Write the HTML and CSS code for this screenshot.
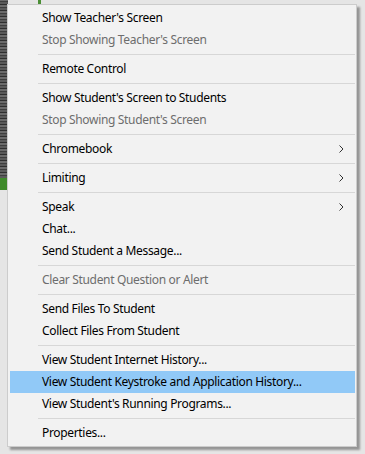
FILE: index.html
```html
<!DOCTYPE html>
<html lang="en">
<head>
  <meta charset="UTF-8" />
  <title>Student Context Menu</title>
  <link rel="stylesheet" href="styles.css">
</head>
<body>

  <div class="desktop">
    <div class="side-strip">
      <div class="photo"></div>
      <div class="green-bar"></div>
    </div>
    <div class="top-mark"></div>
  </div>

  <ul class="context-menu">
    <li class="item">Show Teacher's Screen</li>
    <li class="item disabled">Stop Showing Teacher's Screen</li>
    <li class="sep"></li>
    <li class="item">Remote Control</li>
    <li class="sep"></li>
    <li class="item">Show Student's Screen to Students</li>
    <li class="item disabled">Stop Showing Student's Screen</li>
    <li class="sep"></li>
    <li class="item sub">Chromebook
      <svg class="arrow" width="5" height="8" viewBox="0 0 5 8"><polyline points="0.5,0.5 4,4 0.5,7.5" fill="none" stroke="#333" stroke-width="1"/></svg>
    </li>
    <li class="sep"></li>
    <li class="item sub">Limiting
      <svg class="arrow" width="5" height="8" viewBox="0 0 5 8"><polyline points="0.5,0.5 4,4 0.5,7.5" fill="none" stroke="#333" stroke-width="1"/></svg>
    </li>
    <li class="sep"></li>
    <li class="item sub">Speak
      <svg class="arrow" width="5" height="8" viewBox="0 0 5 8"><polyline points="0.5,0.5 4,4 0.5,7.5" fill="none" stroke="#333" stroke-width="1"/></svg>
    </li>
    <li class="item">Chat...</li>
    <li class="item">Send Student a Message...</li>
    <li class="sep"></li>
    <li class="item disabled">Clear Student Question or Alert</li>
    <li class="sep"></li>
    <li class="item">Send Files To Student</li>
    <li class="item">Collect Files From Student</li>
    <li class="sep"></li>
    <li class="item">View Student Internet History...</li>
    <li class="item active">View Student Keystroke and Application History...</li>
    <li class="item">View Student's Running Programs...</li>
    <li class="sep"></li>
    <li class="item">Properties...</li>
  </ul>

</body>
</html>
```

FILE: styles.css
```css
body {
  margin: 0;
  padding: 0;
  width: 365px;
  height: 454px;
  overflow: hidden;
  background: #e5e5e5;
  font-family: "Noto Sans", "Open Sans", sans-serif;
  font-size: 12px;
}

.desktop {
  height: 454px;
  display: flex;
}

.side-strip {
  width: 8px;
  display: flex;
  flex-direction: column;
}

.photo {
  height: 178px;
  background: repeating-linear-gradient(0deg, #5a5a5a 0 2px, #3f3f3f 2px 3px, #6b6b6b 3px 5px, #2f2f2f 5px 6px);
}

.green-bar {
  height: 12px;
  background: #3f8a2a;
}

.top-mark {
  width: 3px;
  height: 4px;
  margin-left: 30px;
  background: #4a8f35;
}

.context-menu {
  position: absolute;
  left: 7px;
  top: 4px;
  width: 348px;
  margin: 0;
  padding: 2px 0;
  list-style: none;
  background: #f2f2f2;
  border: 1px solid #cccccc;
  box-shadow: 3px 3px 2px rgba(0, 0, 0, 0.35);
}

.item {
  height: 22px;
  line-height: 22px;
  padding-left: 32px;
  margin: 0 1px 0 2px;
  color: #000;
  letter-spacing: -0.33px;
  display: flex;
  align-items: center;
  justify-content: space-between;
  white-space: nowrap;
}

.item.disabled {
  color: #6d6d6d;
}

.item.active {
  background: #91c9f7;
}

.arrow {
  margin-right: 11px;
}

.sep {
  height: 1px;
  margin: 3px 1px 3px 30px;
  background: #d7d7d7;
}
```
